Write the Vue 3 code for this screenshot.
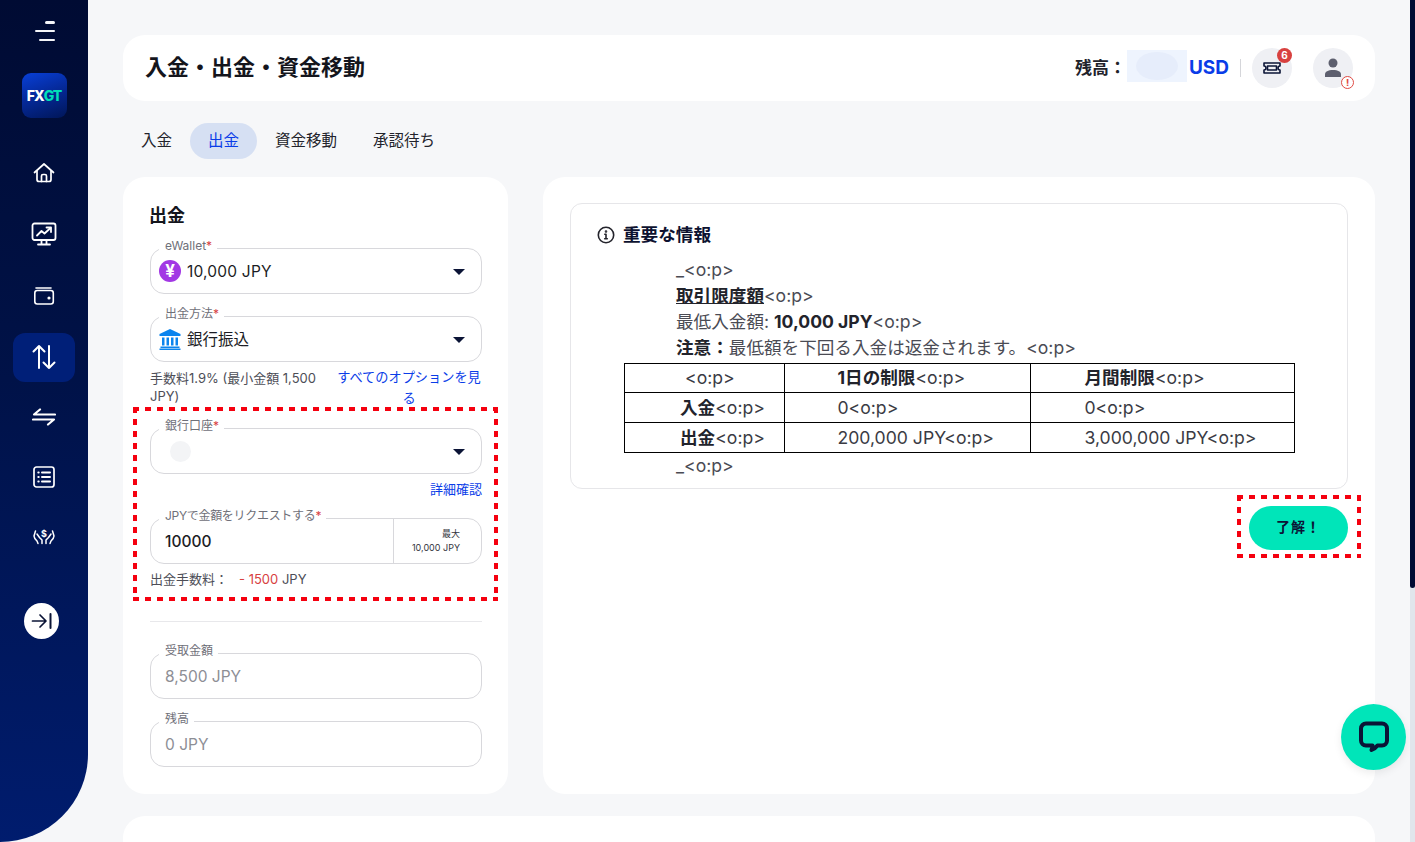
<script setup>
const navItems = ["home", "chart", "wallet", "updown", "swap", "list", "hands"];

const limitRows = [
  { label: "入金", day: "0", month: "0" },
  { label: "出金", day: "200,000 JPY", month: "3,000,000 JPY" },
];

const tabs = ["入金", "出金", "資金移動", "承認待ち"];
</script>

<template>
  <div class="page">
    <aside class="sidebar">
      <button class="burger" aria-label="menu"><span class="b1"></span><span class="b2"></span><span class="b3"></span></button>
      <div class="logo"><span class="fx">FX</span><span class="gt">GT</span></div>
      <nav class="nav">
        <div v-for="item in navItems" :key="item" :class="['nav-item', { active: item === 'updown' }]">
          <svg v-if="item === 'home'" width="22" height="22" viewBox="0 0 22 22" fill="none" stroke="#fff" stroke-width="1.7" stroke-linejoin="round" stroke-linecap="round">
            <path d="M1.500 10.500 11 2l9.500 8.500" />
            <path d="M4 9v8.500a2 2 0 0 0 2 2h10a2 2 0 0 0 2-2V9" />
            <path d="M8.500 19.500V14a1.500 1.500 0 0 1 1.500-1.500h2a1.500 1.500 0 0 1 1.500 1.500v5.500" />
          </svg>
          <svg v-else-if="item === 'chart'" width="26" height="24" viewBox="0 0 26 24" fill="none" stroke="#fff" stroke-width="1.8" stroke-linecap="round" stroke-linejoin="round">
            <rect x="1.500" y="1.500" width="23" height="16.500" rx="2" />
            <path d="M6 13.500l4.500-4.500 3 2.500L19.500 6" />
            <path d="M15.500 5.500h4.500V10" />
            <path d="M10.500 18.500v3M15.500 18.500v3M7 22.500h12" />
          </svg>
          <svg v-else-if="item === 'wallet'" width="22" height="20" viewBox="0 0 22 20" fill="none" stroke="#fff" stroke-width="1.6" stroke-linecap="round">
            <rect x="1.800" y="4.500" width="18.500" height="13.500" rx="2.500" />
            <path d="M3 2h15" />
            <circle cx="16" cy="12" r="0.800" fill="#fff" />
          </svg>
          <svg v-else-if="item === 'updown'" width="24" height="26" viewBox="0 0 24 26" fill="none" stroke="#fff" stroke-width="2" stroke-linecap="round" stroke-linejoin="round">
            <path d="M7 24V2M1.500 7.500 7 2l5.500 5.500" />
            <path d="M17 2v22M11.500 18.500 17 24l5.500-5.500" />
          </svg>
          <svg v-else-if="item === 'swap'" width="24" height="18" viewBox="0 0 24 18" fill="none" stroke="#fff" stroke-width="2.200" stroke-linecap="round" stroke-linejoin="round">
            <path d="M23 6.500H2L8 1.500" />
            <path d="M1 11.500h21L16 16.500" />
          </svg>
          <svg v-else-if="item === 'list'" width="22" height="22" viewBox="0 0 22 22" fill="none" stroke="#fff" stroke-width="1.700" stroke-linecap="round">
            <rect x="1" y="1" width="20" height="20" rx="2.500" />
            <path d="M9 6.500h8M9 11h8M9 15.500h8" stroke-width="2" />
            <path d="M5.300 6.500h.4M5.300 11h.4M5.300 15.500h.4" stroke-width="2" />
          </svg>
          <svg v-else width="22" height="16" viewBox="0 0 22 16" fill="none" stroke="#fff" stroke-width="1.500" stroke-linecap="round" stroke-linejoin="round">
            <path d="M2.500 2 1 7c0 2 1.500 3.500 3 5l1 2.500" />
            <path d="M4 5l2.500 3.500L9 11v3.500" />
            <path d="M19.500 2 21 7c0 2-1.500 3.500-3 5l-1 2.500" />
            <path d="M18 5l-2.500 3.500L13 11v3.500" />
            <text x="11" y="8" text-anchor="middle" class="dollar">$</text>
          </svg>
        </div>
      </nav>
      <button class="collapse" aria-label="collapse">
        <svg width="22" height="18" viewBox="0 0 22 18" fill="none" stroke="#0b1436" stroke-width="1.700" stroke-linecap="round" stroke-linejoin="round">
          <path d="M1.500 9h13M9 3l6 6-6 6" />
          <path d="M19.500 2v14" stroke-width="2" />
        </svg>
      </button>
    </aside>

    <main class="main">
      <header class="topbar">
        <h1>入金・出金・資金移動</h1>
        <div class="top-right">
          <span class="balance-label">残高：</span>
          <span class="blurred"><i></i></span>
          <span class="usd">USD</span>
          <span class="sep"></span>
          <div class="round-btn ticket">
            <svg width="18" height="14" viewBox="0 0 18 14" fill="none" stroke="#0b1436" stroke-width="1.600" stroke-linejoin="round">
              <path d="M1 2h16v3a2 2 0 0 0 0 4v3H1V9a2 2 0 0 0 0-4z" />
              <rect x="4.500" y="5" width="9" height="4" />
            </svg>
            <span class="count">6</span>
          </div>
          <div class="round-btn user">
            <svg width="18" height="20" viewBox="0 0 18 20" fill="#5d5f6e">
              <circle cx="9" cy="5" r="4.500" />
              <path d="M1 19v-2.500C1 13.500 4 12 9 12s8 1.500 8 4.500V19z" />
            </svg>
            <span class="warn">!</span>
          </div>
        </div>
      </header>

      <div class="tabs">
        <button v-for="tab in tabs" :key="tab" :class="['tab', { selected: tab === '出金' }]">{{ tab }}</button>
      </div>

      <div class="columns">
        <section class="form-card">
          <h2>出金</h2>

          <div class="field first">
            <label>eWallet<em>*</em></label>
            <span class="yen">¥</span>
            <span class="value latin">10,000 JPY</span>
            <span class="caret"></span>
          </div>

          <div class="field">
            <label>出金方法<em>*</em></label>
            <svg class="bank" width="22" height="21" viewBox="0 0 22 21" fill="#0b84ee">
              <path d="M11 0 21.500 5v2H.5V5z" />
              <path d="M3 8.500h2.500v8H3zM7.500 8.500H10v8H7.500zM12 8.500h2.500v8H12zM16.500 8.500H19v8h-2.500z" />
              <path d="M1.500 17.500h19V19h-19zM.5 19.500h21V21H.5z" />
            </svg>
            <span class="value cjk">銀行振込</span>
            <span class="caret"></span>
          </div>

          <div class="hint-row">
            <p class="hint">手数料1.9% (最小金額 1,500 JPY)</p>
            <a class="link center">すべてのオプションを見る</a>
          </div>

          <div class="field bank-account">
            <label>銀行口座<em>*</em></label>
            <span class="blank-dot"></span>
            <span class="caret"></span>
          </div>
          <a class="link details">詳細確認</a>

          <div class="field amount">
            <label>JPYで金額をリクエストする<em>*</em></label>
            <span class="value amount-value">10000</span>
            <div class="max">
              <span>最大</span>
              <span>10,000 JPY</span>
            </div>
          </div>
          <p class="fee">出金手数料：<span class="minus">- 1500</span> JPY</p>

          <hr />

          <div class="field readonly">
            <label>受取金額</label>
            <span class="value">8,500 JPY</span>
          </div>
          <div class="field readonly">
            <label>残高</label>
            <span class="value">0 JPY</span>
          </div>

          <div class="mark mark-form"></div>
        </section>

        <section class="info-card">
          <div class="info-box">
            <h3>
              <svg width="18" height="18" viewBox="0 0 18 18" fill="none" stroke="#24242c" stroke-width="1.600" stroke-linecap="round">
                <circle cx="9" cy="9" r="7.700" />
                <path d="M9 8.300v4.200M7.700 12.700h2.600M7.800 8.300H9" />
                <circle cx="9" cy="5.500" r="0.500" />
              </svg>
              重要な情報
            </h3>
            <div class="info-body">
              <p class="indent">_&lt;o:p&gt;</p>
              <p class="indent"><strong class="under">取引限度額</strong>&lt;o:p&gt;</p>
              <p class="indent">最低入金額: <strong>10,000 JPY</strong>&lt;o:p&gt;</p>
              <p class="indent"><strong>注意：</strong>最低額を下回る入金は返金されます。&lt;o:p&gt;</p>
              <table>
                <tbody>
                  <tr>
                    <td class="c1 blank">&lt;o:p&gt;</td>
                    <td class="c2"><strong>1日の制限</strong>&lt;o:p&gt;</td>
                    <td class="c3"><strong>月間制限</strong>&lt;o:p&gt;</td>
                  </tr>
                  <tr v-for="row in limitRows" :key="row.label">
                    <td class="c1"><strong>{{ row.label }}</strong>&lt;o:p&gt;</td>
                    <td class="c2">{{ row.day }}&lt;o:p&gt;</td>
                    <td class="c3">{{ row.month }}&lt;o:p&gt;</td>
                  </tr>
                </tbody>
              </table>
              <p class="indent">_&lt;o:p&gt;</p>
            </div>
          </div>
          <div class="actions">
            <button class="ok">了解！</button>
            <div class="mark mark-ok"></div>
          </div>
        </section>
      </div>

      <div class="bottom-card"></div>
    </main>

    <button class="chat" aria-label="chat">
      <svg width="32" height="32" viewBox="0 0 32 32" fill="none">
        <path d="M8 2.500h16a5 5 0 0 1 5 5v12a5 5 0 0 1-5 5h-4.500c-1.500 2-3.500 3.500-6 4.500.8-1.500 1-3 1-4.500H8a5 5 0 0 1-5-5v-12a5 5 0 0 1 5-5z" stroke="#0b1436" stroke-width="4" stroke-linejoin="round" />
      </svg>
    </button>

    <div class="scrollbar"><div class="thumb"></div></div>
  </div>
</template>

<style>
html,
body {
  margin: 0;
  overflow: hidden;
}
</style>

<style scoped>
.page {
  position: relative;
  display: flex;
  height: 842px;
  overflow: hidden;
  background: #f6f7f9;
  color: #22232b;
  font-family: "Inter", "Noto Sans CJK JP", sans-serif;
}

button {
  font-family: inherit;
  border: none;
  cursor: pointer;
}

/* sidebar */
.sidebar {
  flex: 0 0 88px;
  height: 842px;
  box-sizing: border-box;
  padding-top: 21px;
  display: flex;
  flex-direction: column;
  align-items: center;
  background: linear-gradient(180deg, #000b33 0%, #001248 45%, #001c6e 100%);
  border-bottom-right-radius: 88px;
}

.burger {
  width: 22px;
  height: 20px;
  padding: 0;
  background: none;
  display: flex;
  flex-direction: column;
  align-items: flex-end;
  justify-content: space-between;
}

.burger span {
  display: block;
  height: 2.500px;
  border-radius: 2px;
  background: #f4f5f8;
}

.b1 {
  width: 10px;
}
.b2 {
  width: 20px;
}
.b3 {
  width: 16px;
}

.logo {
  width: 45px;
  height: 45px;
  margin-top: 32px;
  border-radius: 9px;
  display: flex;
  align-items: center;
  justify-content: center;
  font-size: 14px;
  font-weight: 800;
  letter-spacing: -1px;
  background: linear-gradient(160deg, #0840d8 0%, #052a9c 45%, #001658 100%);
}

.fx {
  color: #fff;
}
.gt {
  color: #00e0b8;
}

.nav {
  margin-top: 30px;
  display: flex;
  flex-direction: column;
  align-items: center;
}

.nav-item {
  width: 62px;
  height: 49px;
  margin-bottom: 11px;
  border-radius: 12px;
  display: flex;
  align-items: center;
  justify-content: center;
}

.nav-item:nth-child(-n + 3) {
  margin-bottom: 12.600px;
}

.nav-item.active {
  background: #001f78;
}

.dollar {
  font-size: 9px;
  font-weight: 700;
  fill: #fff;
  stroke: none;
}

.collapse {
  width: 35px;
  height: 36px;
  margin: 30px 5px 0 0;
  padding: 0;
  border-radius: 50%;
  background: #fff;
  display: flex;
  align-items: center;
  justify-content: center;
}

/* main */
.main {
  flex: 1;
  min-width: 0;
  padding: 35px 40px 0 35px;
}

.topbar {
  height: 66px;
  box-sizing: border-box;
  padding: 0 22px 0 22px;
  display: flex;
  align-items: center;
  justify-content: space-between;
  background: #fff;
  border-radius: 22px;
}

h1 {
  margin: 0 0 6px;
  font-size: 22px;
  font-weight: 700;
  color: #14151c;
}

.top-right {
  display: flex;
  align-items: center;
}

.balance-label {
  margin: 0 1px 4px 0;
  font-size: 17px;
  font-weight: 700;
}

.blurred {
  width: 60px;
  height: 32px;
  margin-bottom: 4px;
  display: flex;
  align-items: center;
  justify-content: center;
  background: #eef4fe;
}

.blurred i {
  width: 42px;
  height: 28px;
  border-radius: 50%;
  background: #e6edfb;
}

.usd {
  margin: 0 0 1px 2px;
  font-size: 19px;
  font-weight: 700;
  color: #0a3de8;
}

.sep {
  width: 1px;
  height: 18px;
  margin: 0 11px;
  background: #d5d6da;
}

.round-btn {
  position: relative;
  width: 40px;
  height: 40px;
  border-radius: 50%;
  background: #eff0f4;
  display: flex;
  align-items: center;
  justify-content: center;
}

.user {
  margin-left: 21px;
}

.count {
  position: absolute;
  top: 0;
  right: 0;
  width: 15px;
  height: 15px;
  border-radius: 50%;
  background: #d8413f;
  color: #fff;
  font-size: 10px;
  font-weight: 700;
  line-height: 15px;
  text-align: center;
}

.warn {
  position: absolute;
  right: -1px;
  bottom: -1px;
  width: 11px;
  height: 11px;
  border: 1.500px solid #df4a44;
  border-radius: 50%;
  background: #fff;
  color: #df4a44;
  font-size: 9px;
  font-weight: 800;
  line-height: 11px;
  text-align: center;
}

/* tabs */
.tabs {
  margin-top: 22px;
  height: 36px;
  display: flex;
}

.tab {
  height: 36px;
  padding: 0 18px 4px;
  background: none;
  border-radius: 18px;
  font-size: 15.500px;
  color: #22232b;
}

.tab.selected {
  background: #d6e0f3;
  color: #0a3de8;
}

/* cards */
.columns {
  margin-top: 18px;
  display: flex;
  gap: 35px;
  height: 617px;
}

.form-card {
  position: relative;
  width: 385px;
  box-sizing: border-box;
  padding: 26px 26px 0 27px;
  background: #fff;
  border-radius: 22px;
}

h2 {
  margin: 0 0 0 -1px;
  height: 21px;
  line-height: 26px;
  font-size: 18px;
  font-weight: 700;
  color: #14151c;
}

.field {
  position: relative;
  height: 46px;
  box-sizing: border-box;
  margin-top: 22px;
  padding-left: 8px;
  display: flex;
  align-items: center;
  border: 1px solid #d8d8dc;
  border-radius: 14px;
}

.field.first {
  margin-top: 24px;
}

.field label {
  position: absolute;
  top: -13px;
  left: 8px;
  padding: 0 5px 0 6px;
  background: linear-gradient(transparent 12px, #fff 12px);
  font-size: 12px;
  line-height: 20px;
  color: #6f7079;
}

.amount label {
  letter-spacing: -0.3px;
}

.field em {
  color: #d8413f;
  font-style: normal;
}

.yen {
  width: 22px;
  height: 22px;
  margin-right: 6px;
  border-radius: 50%;
  background: #a238e4;
  color: #fff;
  font-size: 17px;
  font-weight: 700;
  line-height: 22px;
  text-align: center;
}

.bank {
  margin-right: 6px;
}

.value {
  font-size: 15.500px;
  color: #1b1c24;
}

.latin {
  letter-spacing: 0.2px;
}

.cjk {
  padding-bottom: 3px;
}

.caret {
  position: absolute;
  right: 16px;
  top: 20px;
  width: 0;
  height: 0;
  border-left: 6px solid transparent;
  border-right: 6px solid transparent;
  border-top: 6px solid #0b1436;
}

.hint-row {
  margin-top: 5px;
  display: flex;
  justify-content: space-between;
  gap: 18px;
}

.hint {
  margin: 2px 0 0;
  flex: 1;
  font-size: 13px;
  line-height: 18px;
  color: #4d4e57;
}

.link {
  color: #0a3de8;
  font-size: 13px;
  line-height: 21px;
}

.center {
  width: 146px;
  font-size: 13.200px;
  text-align: center;
}

.field.bank-account {
  margin-top: 19px;
}

.blank-dot {
  width: 21px;
  height: 21px;
  margin-left: 11px;
  border-radius: 50%;
  background: #f3f4f6;
}

.details {
  display: block;
  margin-top: 5px;
  text-align: right;
}

.field.amount {
  margin-top: 18px;
  padding-left: 14px;
  justify-content: space-between;
}

.amount-value {
  font-weight: 500;
}

.max {
  width: 88px;
  height: 100%;
  box-sizing: border-box;
  padding: 9px 21px 0 0;
  display: flex;
  flex-direction: column;
  align-items: flex-end;
  gap: 2px;
  border-left: 1px solid #d8d8dc;
  font-size: 9px;
  line-height: 12px;
  color: #34353e;
}

.fee {
  margin: 6px 0 0;
  font-size: 13px;
  line-height: 18px;
  color: #4d4e57;
}

.minus {
  margin-left: 11px;
  color: #d8413f;
}

hr {
  margin: 33px 0 0;
  border: none;
  border-top: 1px solid #e8e8eb;
}

.field.readonly {
  margin-top: 22px;
  padding-left: 14px;
}

hr + .field.readonly {
  margin-top: 31px;
}

.readonly .value {
  color: #8d8e95;
}

/* red dashed callouts sit over the content */
.mark {
  position: absolute;
  box-sizing: border-box;
  pointer-events: none;
  background:
    repeating-linear-gradient(90deg, #f5000f 0 6px, transparent 6px 12px) top / 100% 4px no-repeat,
    repeating-linear-gradient(90deg, #f5000f 0 6px, transparent 6px 12px) bottom / 100% 4px no-repeat,
    repeating-linear-gradient(180deg, #f5000f 0 6px, transparent 6px 12px) left / 4px 100% no-repeat,
    repeating-linear-gradient(180deg, #f5000f 0 6px, transparent 6px 12px) right / 4px 100% no-repeat;
}

.mark-form {
  left: 10px;
  top: 230px;
  width: 365px;
  height: 194px;
}

.info-card {
  flex: 1;
  box-sizing: border-box;
  padding: 26px 27px 0;
  background: #fff;
  border-radius: 22px;
}

.info-box {
  height: 286px;
  box-sizing: border-box;
  padding: 19px 26px 0 26px;
  border: 1px solid #e6e6e9;
  border-radius: 12px;
}

h3 {
  margin: 0;
  display: flex;
  align-items: center;
  gap: 8px;
  font-size: 17.600px;
  line-height: 24px;
  font-weight: 700;
  color: #0d1230;
}

.info-body {
  margin-top: 9.500px;
  font-size: 17.600px;
  line-height: 26px;
  color: #4a4b54;
}

.info-body p {
  margin: 0;
  height: 26px;
  white-space: nowrap;
}

.indent {
  padding-left: 79px;
}

strong {
  font-weight: 700;
  color: #22232b;
}

.under {
  text-decoration: underline;
}

table {
  width: 671px;
  margin: 2.500px 0 0 27px;
  border-collapse: collapse;
  table-layout: fixed;
  color: #3a3b44;
}

td {
  height: 30px;
  padding: 0;
  border: 1px solid #000;
  line-height: 20px;
}

tr:first-child td {
  height: 29px;
}

.c1 {
  width: 159.500px;
  padding-left: 55px;
  box-sizing: border-box;
  white-space: nowrap;
}

.c1.blank {
  padding-left: 60px;
}

.c2 {
  width: 246px;
  padding-left: 53px;
  box-sizing: border-box;
}

.c3 {
  padding-left: 54px;
  box-sizing: border-box;
}

.actions {
  position: relative;
  margin-top: 17px;
  display: flex;
  justify-content: flex-end;
}

.ok {
  width: 99px;
  height: 44px;
  padding-bottom: 5px;
  border-radius: 22px;
  background: #00e5b9;
  color: #0b1436;
  font-size: 14px;
  font-weight: 700;
  letter-spacing: 1px;
}

.mark-ok {
  right: -13px;
  top: -11px;
  width: 124px;
  height: 63px;
}

.bottom-card {
  height: 60px;
  margin-top: 22px;
  background: #fff;
  border-radius: 22px;
}

.chat {
  position: absolute;
  left: 1341px;
  top: 704px;
  width: 65px;
  height: 66px;
  padding: 0;
  border-radius: 50%;
  background: #00e5b9;
  display: flex;
  align-items: center;
  justify-content: center;
  box-shadow: 0 3px 8px rgba(0, 0, 0, 0.08);
}

.scrollbar {
  position: absolute;
  top: 0;
  right: 0;
  width: 5px;
  height: 842px;
  background: #e1e6ec;
}

.thumb {
  height: 588px;
  border-radius: 0 0 3px 3px;
  background: #000b33;
}
</style>
